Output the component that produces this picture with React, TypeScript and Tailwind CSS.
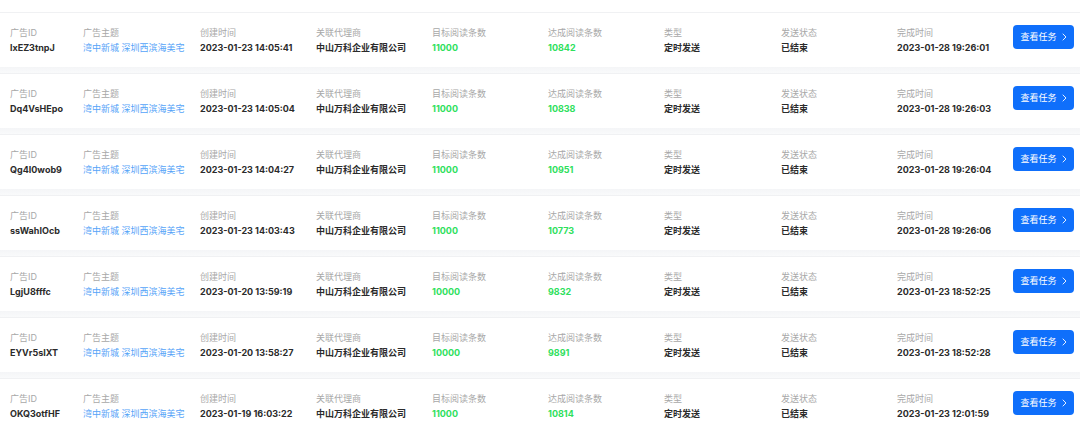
import React from "react";

type Task = {
  id: string;
  created: string;
  target: string;
  reached: string;
  finished: string;
};

const tasks: Task[] = [
  { id: "lxEZ3tnpJ", created: "2023-01-23 14:05:41", target: "11000", reached: "10842", finished: "2023-01-28 19:26:01" },
  { id: "Dq4VsHEpo", created: "2023-01-23 14:05:04", target: "11000", reached: "10838", finished: "2023-01-28 19:26:03" },
  { id: "Qg4I0wob9", created: "2023-01-23 14:04:27", target: "11000", reached: "10951", finished: "2023-01-28 19:26:04" },
  { id: "ssWahIOcb", created: "2023-01-23 14:03:43", target: "11000", reached: "10773", finished: "2023-01-28 19:26:06" },
  { id: "LgjU8fffc", created: "2023-01-20 13:59:19", target: "10000", reached: "9832", finished: "2023-01-23 18:52:25" },
  { id: "EYVr5sIXT", created: "2023-01-20 13:58:27", target: "10000", reached: "9891", finished: "2023-01-23 18:52:28" },
  { id: "OKQ3otfHF", created: "2023-01-19 16:03:22", target: "11000", reached: "10814", finished: "2023-01-23 12:01:59" },
];

function Field({
  label,
  value,
  width,
  tone = "dark",
}: {
  label: string;
  value: string;
  width: string;
  tone?: "dark" | "blue" | "green";
}) {
  const valueClass =
    tone === "blue"
      ? "text-[#55a3f8] font-normal"
      : tone === "green"
      ? "text-[#2ee05c] font-bold"
      : "text-[#2b2b2b] font-bold";
  return (
    <div className={`${width} shrink-0 flex flex-col`}>
      <span className="text-[9px] leading-[12px] text-[#a8a8a8] whitespace-nowrap">
        {label}
      </span>
      <span className={`mt-[2px] text-[9px] leading-[13px] whitespace-nowrap ${valueClass}`}>
        {value}
      </span>
    </div>
  );
}

function TaskRow({ task }: { task: Task }) {
  return (
    <div>
      <div className="h-px bg-[#f0f1f3]" />
      <div className="flex items-start bg-white pl-[10px] pt-[14px] pb-[13px]">
        <Field width="w-[73px]" label="广告ID" value={task.id} />
        <Field width="w-[117px]" label="广告主题" value="湾中新城 深圳西滨海美宅" tone="blue" />
        <Field width="w-[116px]" label="创建时间" value={task.created} />
        <Field width="w-[116px]" label="关联代理商" value="中山万科企业有限公司" />
        <Field width="w-[116px]" label="目标阅读条数" value={task.target} tone="green" />
        <Field width="w-[116px]" label="达成阅读条数" value={task.reached} tone="green" />
        <Field width="w-[117px]" label="类型" value="定时发送" />
        <Field width="w-[116px]" label="发送状态" value="已结束" />
        <Field width="w-[116px]" label="完成时间" value={task.finished} />
        <button className="-mt-[2px] flex h-[24px] w-[61px] shrink-0 items-center justify-center gap-[5px] rounded-[4px] bg-[#0f6ffb] text-[9px] text-white">
          <span>查看任务</span>
          <svg width="5" height="8" viewBox="0 0 5 8" fill="none">
            <path d="M1 1l3 3-3 3" stroke="white" strokeWidth="0.9" strokeLinecap="round" strokeLinejoin="round" />
          </svg>
        </button>
      </div>
      <div className="h-[6px] bg-gradient-to-b from-[#f4f5f7] to-[#f9fafb]" />
    </div>
  );
}

export default function App() {
  return (
    <div
      className="h-[425px] w-[1080px] overflow-hidden bg-white pt-[12px]"
      style={{ fontFamily: 'Inter, "Noto Sans CJK SC", sans-serif' }}
    >
      {tasks.map((t) => (
        <TaskRow key={t.id} task={t} />
      ))}
    </div>
  );
}
